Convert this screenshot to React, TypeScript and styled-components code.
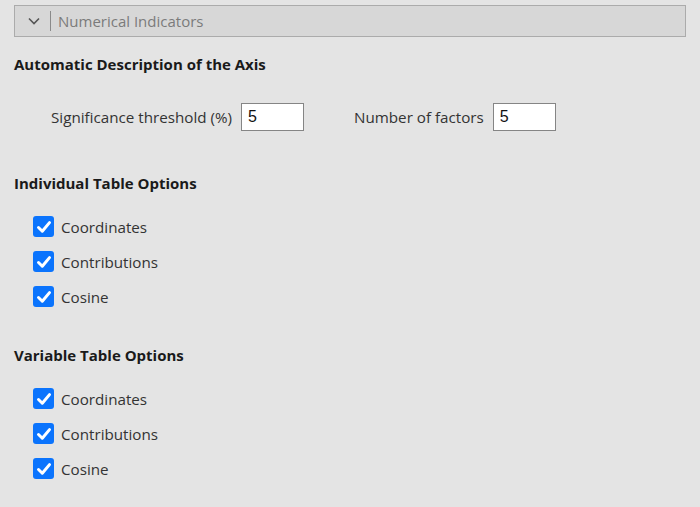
import React from "react";
import styled, { createGlobalStyle } from "styled-components";

const Global = createGlobalStyle`
  html, body { margin: 0; padding: 0; background: #e4e4e4; }
  body { font-family: "Open Sans", "Noto Sans", sans-serif; color: #222; }
`;

const Page = styled.div`
  width: 700px;
  height: 507px;
  box-sizing: border-box;
  padding: 5px 14px 0 14px;
  background: #e4e4e4;
`;

const Header = styled.div`
  width: 672px;
  height: 32px;
  box-sizing: border-box;
  border: 1px solid #ababab;
  background: #d7d7d7;
  display: flex;
  align-items: center;
`;

const Chevron = styled.div`
  width: 35px;
  display: flex;
  justify-content: center;
  padding-left: 2px;
  box-sizing: border-box;
`;

const Divider = styled.div`
  width: 1px;
  height: 20px;
  background: #8a8a8a;
  margin-right: 7px;
`;

const HeaderText = styled.span`
  font-size: 15px;
  color: #7b7b7b;
`;

const Heading = styled.div<{ $top: number }>`
  margin-top: ${(p) => p.$top}px;
  font-size: 15px;
  font-weight: 700;
  color: #1a1a1a;
  line-height: 20px;
`;

const InputRow = styled.div`
  margin-top: 29px;
  padding-left: 37px;
  display: flex;
  align-items: center;
  height: 28px;
`;

const Field = styled.label<{ $gap?: number }>`
  display: flex;
  align-items: center;
  margin-right: ${(p) => p.$gap ?? 0}px;
  font-size: 15.2px;
  color: #333;
`;

const NumInput = styled.input`
  margin-left: 9px;
  width: 63px;
  height: 28px;
  box-sizing: border-box;
  border: 1px solid #858585;
  background: #fff;
  font-family: "Liberation Sans", Arial, sans-serif;
  font-size: 16px;
  padding: 0 6px;
  color: #111;
  outline: none;
`;

const CheckList = styled.div`
  margin-top: 23px;
  padding-left: 19px;
  display: flex;
  flex-direction: column;
  gap: 14px;
`;

const CheckRow = styled.label`
  display: flex;
  align-items: center;
  height: 21px;
  font-size: 15.2px;
  color: #333;
`;

const Box = styled.span`
  width: 21px;
  height: 21px;
  border-radius: 3px;
  background: #0b74fd;
  display: flex;
  align-items: center;
  justify-content: center;
  margin-right: 7px;
`;

const Check = ({ label }: { label: string }) => (
  <CheckRow>
    <Box>
      <svg width="16" height="16" viewBox="0 0 16 16">
        <path d="M2.5 8.5 L6.3 12.2 L13.5 3.6" fill="none" stroke="#fff" strokeWidth="3" strokeLinecap="round" strokeLinejoin="round" />
      </svg>
    </Box>
    {label}
  </CheckRow>
);

export default function App() {
  return (
    <Page>
      <Global />
      <Header>
        <Chevron>
          <svg width="12" height="8" viewBox="0 0 12 8">
            <path d="M1 1.5 L6 6.5 L11 1.5" fill="none" stroke="#555" strokeWidth="1.6" />
          </svg>
        </Chevron>
        <Divider />
        <HeaderText>Numerical Indicators</HeaderText>
      </Header>
      <Heading $top={17}>Automatic Description of the Axis</Heading>
      <InputRow>
        <Field $gap={50}>
          Significance threshold (%)
          <NumInput defaultValue="5" />
        </Field>
        <Field>
          Number of factors
          <NumInput defaultValue="5" />
        </Field>
      </InputRow>
      <Heading $top={42}>Individual Table Options</Heading>
      <CheckList>
        <Check label="Coordinates" />
        <Check label="Contributions" />
        <Check label="Cosine" />
      </CheckList>
      <Heading $top={38}>Variable Table Options</Heading>
      <CheckList>
        <Check label="Coordinates" />
        <Check label="Contributions" />
        <Check label="Cosine" />
      </CheckList>
    </Page>
  );
}
